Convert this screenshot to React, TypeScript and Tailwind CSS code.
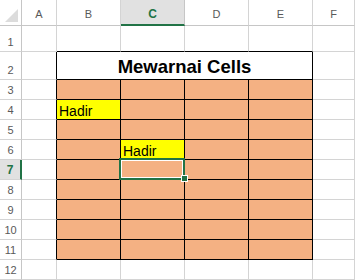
import React from "react";

const COLS = ["", "A", "B", "C", "D", "E", "F"];
const ROW_COUNT = 12;

function DataCell({ r, c }: { r: number; c: number }) {
  const inTable = c >= 2 && c <= 5 && r >= 3 && r <= 11;
  const rightBlack = (c === 1 && r >= 2 && r <= 11) || (c >= 2 && c <= 5 && r >= 3 && r <= 11);
  const bottomBlack = c >= 2 && c <= 5 && r >= 1 && r <= 11;
  const yellow = (r === 4 && c === 2) || (r === 6 && c === 3);
  const bg = yellow ? "bg-[#ffff00]" : inTable ? "bg-[#f4b183]" : "bg-white";
  const br = rightBlack ? "border-r-black" : "border-r-[#d4d4d4]";
  const bb = bottomBlack ? "border-b-black" : "border-b-[#d4d4d4]";
  return (
    <div className={`border-r border-b ${br} ${bb} ${bg} flex items-end pl-[2px] pb-[1px]`}>
      {yellow ? <span className="text-[14px] leading-none text-black">Hadir</span> : null}
    </div>
  );
}

export default function App() {
  const cells: React.ReactNode[] = [];
  COLS.forEach((col, c) => {
    if (c === 0) {
      cells.push(
        <div key="corner" className="relative border-r border-b border-r-[#c6c6c6] border-b-[#c6c6c6] bg-white">
          <svg className="absolute left-0 top-0" width="22" height="26" viewBox="0 0 22 26">
            <polygon points="5,22 18,22 18,9" fill="#dcdcdc" />
          </svg>
        </div>
      );
    } else if (col === "C") {
      cells.push(
        <div key="h-C" className="flex items-end justify-center border-r border-r-[#c6c6c6] border-b-2 border-b-[#217346] bg-[#e1e1e1] pb-[4px]">
          <span className="text-[12px] font-bold leading-none text-[#217346]">C</span>
        </div>
      );
    } else {
      cells.push(
        <div key={`h-${col}`} className="flex items-end justify-center border-r border-b border-r-[#d4d4d4] border-b-[#c6c6c6] bg-white pb-[5px]">
          <span className="text-[11px] leading-none text-[#595959]">{col}</span>
        </div>
      );
    }
  });

  for (let r = 1; r <= ROW_COUNT; r++) {
    if (r === 7) {
      cells.push(
        <div key={`rh-${r}`} className="flex items-end justify-center border-r-2 border-b border-r-[#217346] border-b-[#d4d4d4] bg-[#e1e1e1] pb-[3px]">
          <span className="text-[12px] font-bold leading-none text-[#217346]">{r}</span>
        </div>
      );
    } else {
      cells.push(
        <div key={`rh-${r}`} className="flex items-end justify-center border-r border-b border-r-[#c6c6c6] border-b-[#d4d4d4] bg-white pb-[3px]">
          <span className="text-[11px] leading-none text-[#595959]">{r}</span>
        </div>
      );
    }
    for (let c = 1; c <= 6; c++) {
      if (r === 2 && c >= 2 && c <= 5) {
        if (c === 2) {
          cells.push(
            <div key="title" className="col-span-4 flex items-end justify-center border-r border-b border-r-black border-b-black bg-white pb-[3px]">
              <span className="text-[18.5px] font-bold leading-none text-black">Mewarnai Cells</span>
            </div>
          );
        }
        continue;
      }
      cells.push(<DataCell key={`c-${r}-${c}`} r={r} c={c} />);
    }
  }

  return (
    <div className="relative h-[280px] w-[355px] overflow-hidden bg-white" style={{ fontFamily: '"Liberation Sans", Arial, sans-serif' }}>
      <div className="grid grid-cols-[22px_35px_64px_64px_64px_64px_1fr] grid-rows-[26px_26px_28px_repeat(10,20px)]">
        {cells}
      </div>
      <div className="absolute left-[119px] top-[158px] h-[22px] w-[66px] border-2 border-[#217346] shadow-[inset_0_0_0_1px_#ffffff]" />
      <div className="absolute left-[182px] top-[176px] h-[5px] w-[5px] bg-[#217346] outline outline-1 outline-white" />
    </div>
  );
}
